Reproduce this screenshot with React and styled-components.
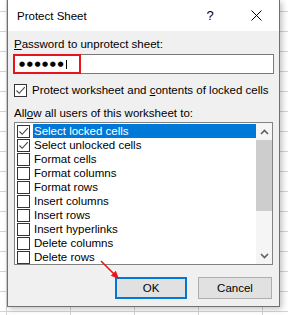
import styled, { createGlobalStyle } from "styled-components";

const GlobalStyle = createGlobalStyle`
  html, body {
    margin: 0;
    padding: 0;
  }
  body {
    width: 288px;
    height: 315px;
    overflow: hidden;
    background-color: #fff;
    background-image:
      linear-gradient(to bottom, #d4d4d4 1px, transparent 1px),
      linear-gradient(to right, #d4d4d4 1px, transparent 1px);
    background-size: 64px 20px;
    background-position: 6px 11px;
    font-family: "Liberation Sans", Arial, sans-serif;
  }
`;

const Page = styled.div`
  width: 288px;
  height: 315px;
  padding-left: 7px;
  box-sizing: border-box;
`;

const Dialog = styled.div`
  position: relative;
  width: 273px;
  height: 307px;
  box-sizing: border-box;
  border: 1px solid #707070;
  border-top: none;
  background: #f0f0f0;
  box-shadow: 2px 2px 6px rgba(0, 0, 0, 0.25);
  display: flex;
  flex-direction: column;
`;

const TitleBar = styled.div`
  height: 31px;
  background: #fff;
  display: flex;
  align-items: center;
  padding: 0 0 0 9px;
  font-size: 11.5px;
  color: #000;
`;

const Title = styled.span`
  flex: 1;
  margin-top: 1px;
`;

const TitleButton = styled.span`
  width: ${(p) => p.w}px;
  display: flex;
  justify-content: center;
  align-items: center;
  font-size: 13px;
`;

const Body = styled.div`
  flex: 1;
  padding: 5px 5px 0 5px;
  display: flex;
  flex-direction: column;
  font-size: 11.5px;
  color: #000;
`;

const Label = styled.div`
  height: 16px;
  line-height: 16px;
  padding-left: 1px;
  margin-bottom: ${(p) => p.mb || 0}px;
  u {
    text-decoration: underline;
    text-underline-offset: 1px;
  }
`;

const InputWrap = styled.div`
  position: relative;
  height: 20px;
  width: 261px;
  box-sizing: border-box;
  border: 1px solid #7a7a7a;
  background: #fff;
  display: flex;
  align-items: center;
  padding-left: 5px;
`;

const Dots = styled.span`
  font-family: "DejaVu Sans", sans-serif;
  font-size: 7px;
  letter-spacing: 1.6px;
  color: #000;
`;

const Caret = styled.span`
  width: 1px;
  height: 9px;
  background: #000;
  margin-left: 1px;
`;

const RedBox = styled.div`
  position: absolute;
  left: -1px;
  top: -1px;
  width: 68px;
  height: 20px;
  border: 2px solid #e8141b;
  box-sizing: border-box;
`;

const CheckRow = styled.div`
  display: flex;
  align-items: center;
  height: 16px;
  margin: 8px 0 7px 1px;
  gap: 5px;
  u {
    text-decoration: underline;
    text-underline-offset: 1px;
  }
`;

const Box = styled.span`
  width: 13px;
  height: 13px;
  box-sizing: border-box;
  border: 1px solid #333;
  background: #fff;
  display: flex;
  align-items: center;
  justify-content: center;
  flex: none;
`;

const List = styled.div`
  margin: 0 0 0 1px;
  width: 259px;
  height: 143px;
  box-sizing: border-box;
  border: 1px solid #828282;
  background: #fff;
  display: flex;
`;

const Items = styled.div`
  flex: 1;
  padding-top: 1px;
`;

const Item = styled.div`
  height: 14px;
  display: flex;
  align-items: center;
  padding-left: 2px;
`;

const ItemText = styled.span`
  flex: 1;
  height: 14px;
  line-height: 14px;
  margin-left: 3px;
  padding-left: 1px;
  background: ${(p) => (p.sel ? "#0078d7" : "transparent")};
  color: ${(p) => (p.sel ? "#fff" : "#000")};
`;

const ScrollBar = styled.div`
  width: 16px;
  background: #f5f5f5;
  display: flex;
  flex-direction: column;
`;

const Arrow = styled.div`
  height: 17px;
  display: flex;
  align-items: center;
  justify-content: center;
`;

const Thumb = styled.div`
  height: 71px;
  background: #cdcdcd;
`;

const Track = styled.div`
  flex: 1;
`;

const Buttons = styled.div`
  display: flex;
  justify-content: flex-end;
  gap: 11px;
  margin-top: 12px;
  padding-right: 2px;
`;

const Button = styled.div`
  width: ${(p) => p.w}px;
  height: 22px;
  box-sizing: border-box;
  background: #e1e1e1;
  border: ${(p) => (p.primary ? "2px solid #0078d7" : "1px solid #adadad")};
  display: flex;
  align-items: center;
  justify-content: center;
  font-size: 11.5px;
`;

const Pointer = styled.svg`
  position: absolute;
  left: 91px;
  top: 259px;
`;

const Check = () => (
  <svg width="11" height="11" viewBox="0 0 11 11">
    <path d="M1.5 5.5 L4.2 8.3 L9.8 2.2" fill="none" stroke="#444" strokeWidth="1.1" />
  </svg>
);

const items = [
  { label: "Select locked cells", checked: true, sel: true },
  { label: "Select unlocked cells", checked: true },
  { label: "Format cells" },
  { label: "Format columns" },
  { label: "Format rows" },
  { label: "Insert columns" },
  { label: "Insert rows" },
  { label: "Insert hyperlinks" },
  { label: "Delete columns" },
  { label: "Delete rows" },
];

export default function App() {
  return (
    <>
      <GlobalStyle />
      <Page>
        <Dialog>
          <TitleBar>
            <Title>Protect Sheet</Title>
            <TitleButton w={46}>?</TitleButton>
            <TitleButton w={46}>
              <svg width="11" height="11" viewBox="0 0 11 11">
                <path d="M0.5 0.5 L10.5 10.5 M10.5 0.5 L0.5 10.5" stroke="#000" strokeWidth="1" />
              </svg>
            </TitleButton>
          </TitleBar>
          <Body>
            <Label mb={2}>
              <u>P</u>assword to unprotect sheet:
            </Label>
            <InputWrap>
              <Dots>●●●●●●</Dots>
              <Caret />
              <RedBox />
            </InputWrap>
            <CheckRow>
              <Box>
                <Check />
              </Box>
              <span>
                Protect worksheet and <u>c</u>ontents of locked cells
              </span>
            </CheckRow>
            <Label mb={1}>
              All<u>o</u>w all users of this worksheet to:
            </Label>
            <List>
              <Items>
                {items.map((it) => (
                  <Item key={it.label}>
                    <Box>{it.checked && <Check />}</Box>
                    <ItemText sel={it.sel}>{it.label}</ItemText>
                  </Item>
                ))}
              </Items>
              <ScrollBar>
                <Arrow>
                  <svg width="9" height="6" viewBox="0 0 9 6">
                    <path d="M1 5 L4.5 1.5 L8 5" fill="none" stroke="#606060" strokeWidth="1.6" />
                  </svg>
                </Arrow>
                <Thumb />
                <Track />
                <Arrow>
                  <svg width="9" height="6" viewBox="0 0 9 6">
                    <path d="M1 1 L4.5 4.5 L8 1" fill="none" stroke="#606060" strokeWidth="1.6" />
                  </svg>
                </Arrow>
              </ScrollBar>
            </List>
            <Buttons>
              <Button w={72} primary>
                OK
              </Button>
              <Button w={74}>Cancel</Button>
            </Buttons>
          </Body>
          <Pointer width="24" height="24" viewBox="0 0 24 24">
            <path d="M2 2 L15 15" stroke="#e8141b" strokeWidth="1.6" />
            <path d="M20 20 L11.8 16.8 L16.8 11.8 Z" fill="#e8141b" />
          </Pointer>
        </Dialog>
      </Page>
    </>
  );
}
